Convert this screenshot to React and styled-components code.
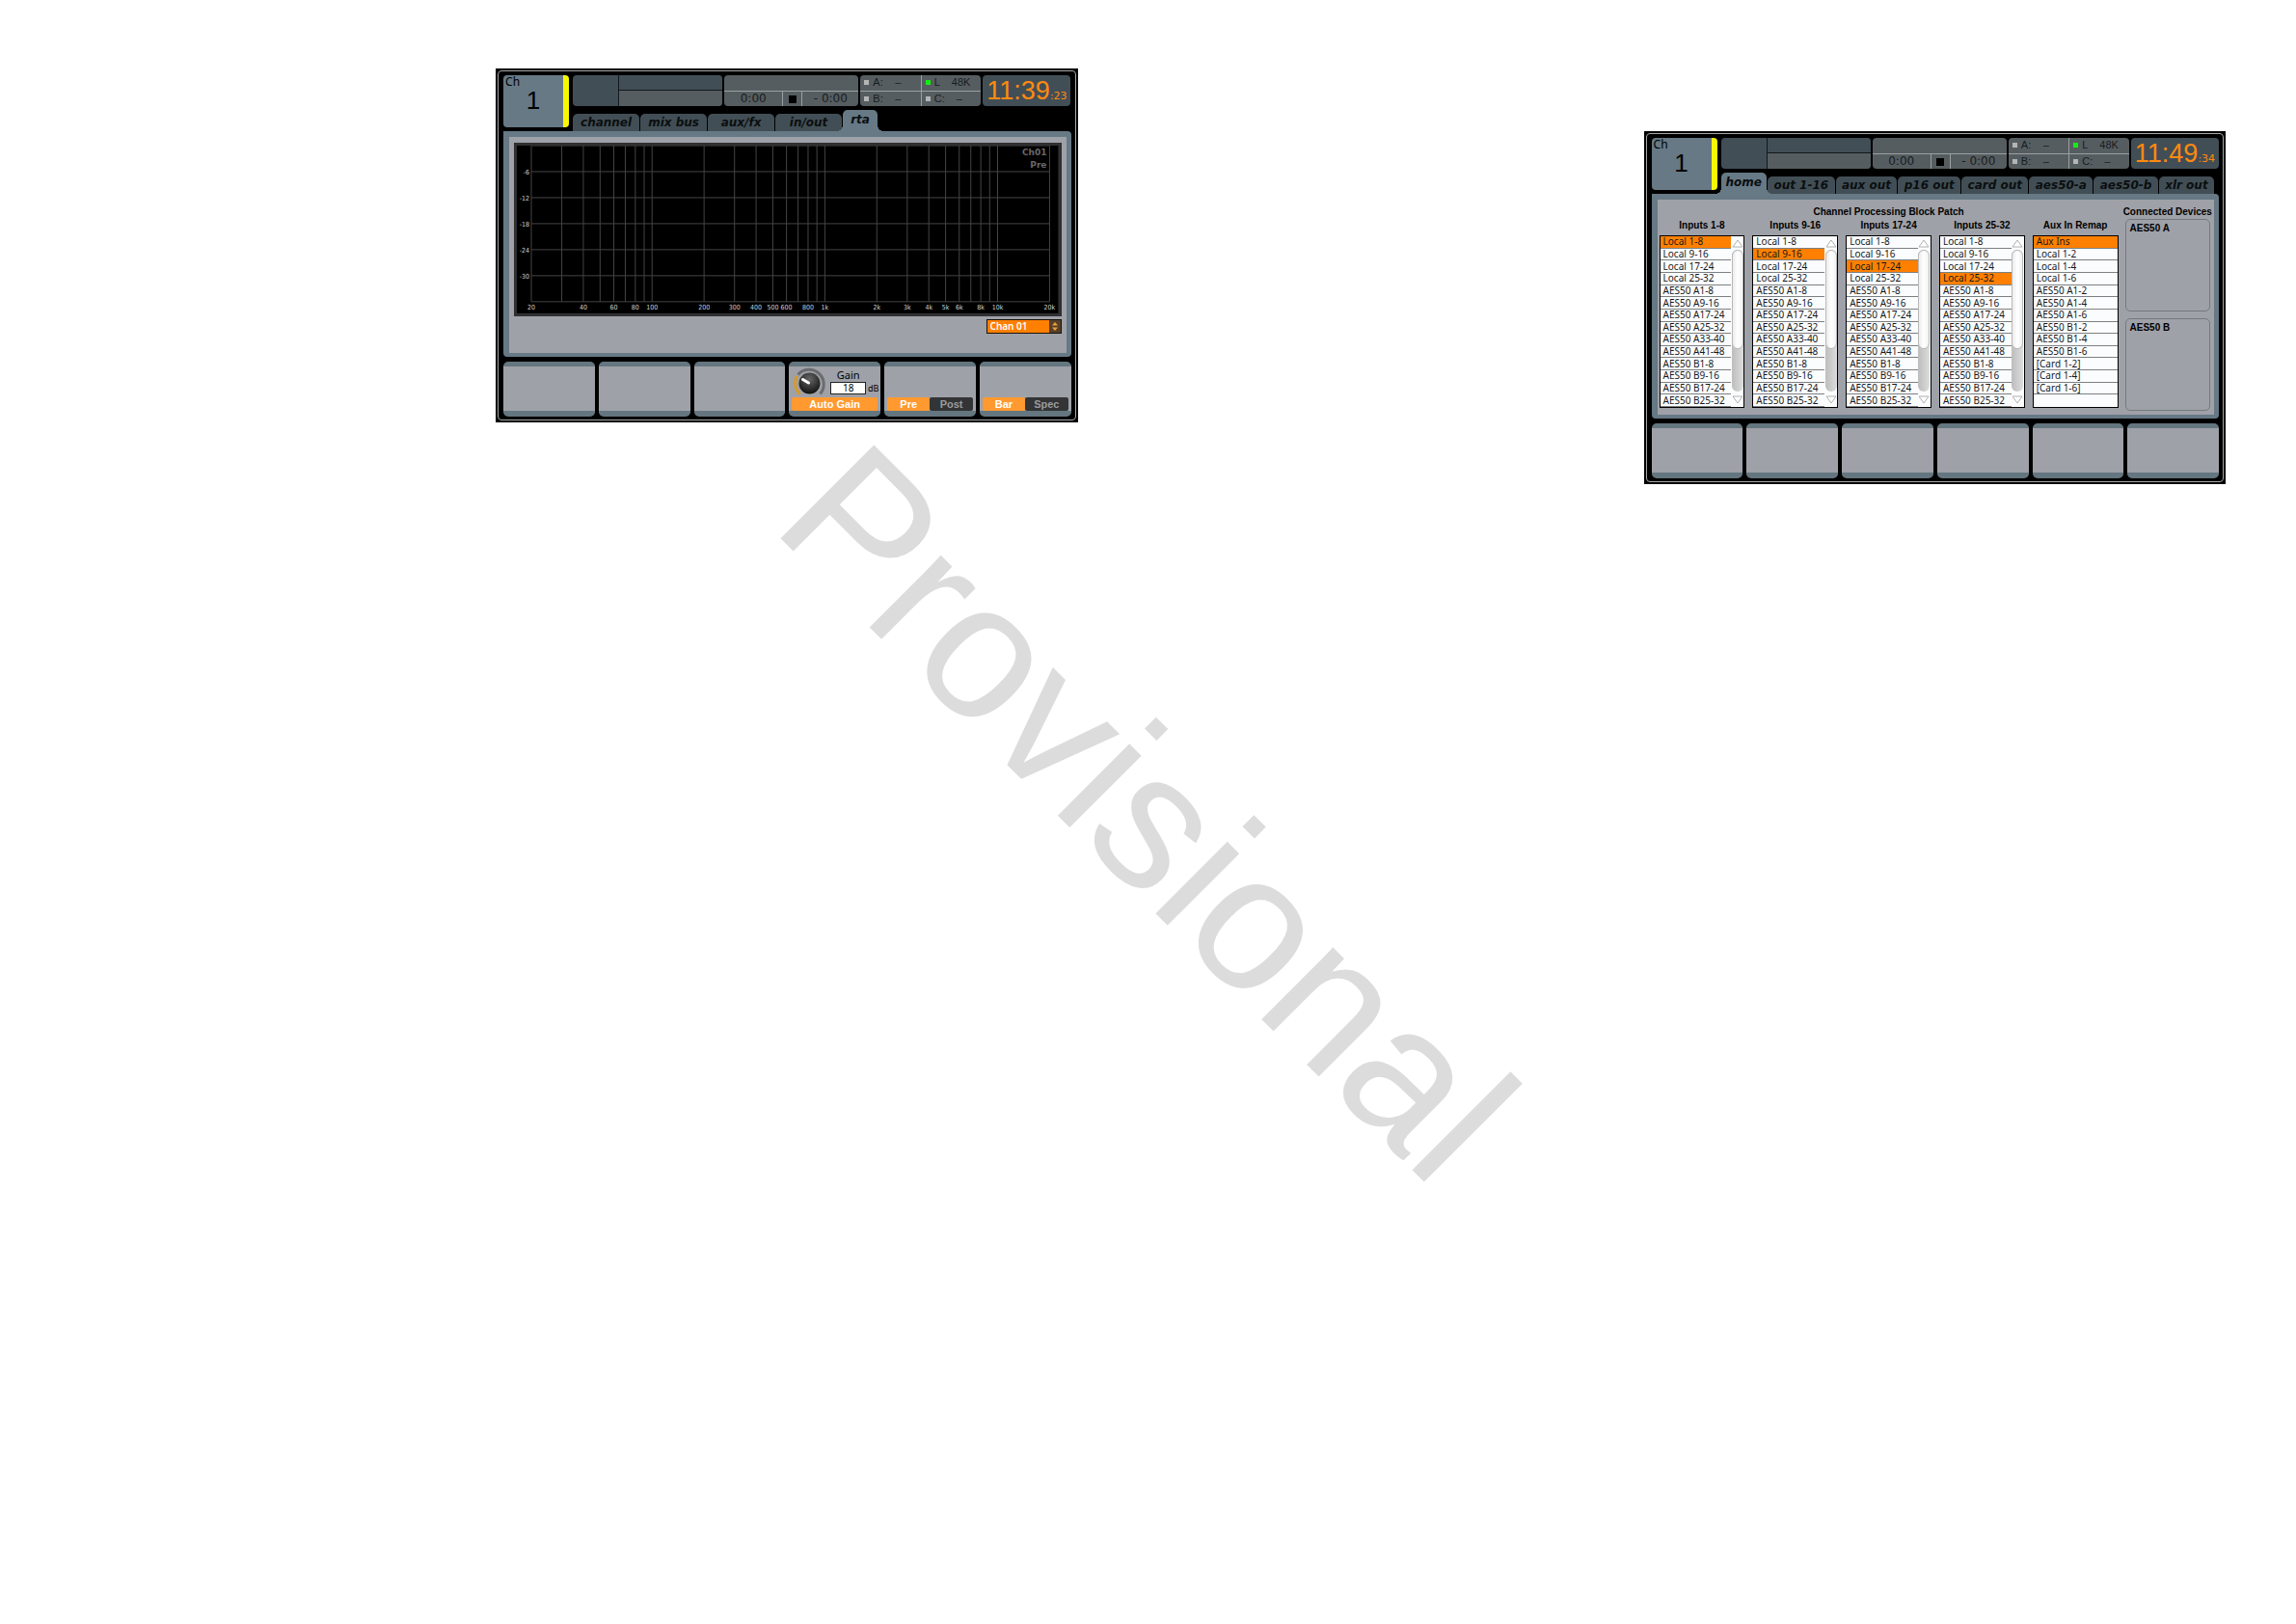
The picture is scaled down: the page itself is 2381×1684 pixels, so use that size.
import React, { useState } from 'react';
import styled, { createGlobalStyle, ThemeProvider } from 'styled-components';

const theme = {
  colors: {
    steel: '#667985',
    slate: '#424e55',
    ash: '#565d60',
    panel: '#9fa1a8',
    orange: '#ff8000',
    amber: '#ff9930',
    clock: '#ff8a10',
    yellow: '#f8f800',
    line: '#9aa0a2',
    ink: '#0a0e10',
  },
  fonts: {
    ui: '"Liberation Sans", Arial, sans-serif',
    list: '"Noto Sans", "Open Sans", sans-serif',
    tab: '"DejaVu Sans", Verdana, sans-serif',
    axis: '"DejaVu Sans Condensed", "DejaVu Sans", sans-serif',
  },
};

const GlobalStyle = createGlobalStyle`
  *, *::before, *::after {
    box-sizing: border-box;
  }
  body {
    margin: 0;
    background: #fff;
  }
  button, input, select {
    margin: 0;
    padding: 0;
    border: 0;
    border-radius: 0;
    background: none;
    color: inherit;
    font: inherit;
  }
  ul {
    margin: 0;
    padding: 0;
    list-style: none;
  }
`;

const Spread = styled.main`
  position: relative;
  display: grid;
  grid-template-columns: 1fr 1fr;
  align-items: start;
  min-height: 100vh;
  overflow: hidden;
  font-family: ${({ theme }) => theme.fonts.ui};
`;

const Sheet = styled.section`
  display: flex;
  justify-content: flex-end;
  padding: ${({ $top }) => $top} 73px 40px 0;
`;

const Watermark = styled.div`
  position: absolute;
  inset: 0;
  display: grid;
  place-items: center;
  pointer-events: none;

  span {
    color: #dcdcdc;
    font-size: 199px;
    line-height: 1;
    transform: rotate(45deg);
  }
`;

const Screen = styled.article`
  width: 54%;
  min-width: 600px;
  padding: 2px;
  background: #000;
`;

const Bezel = styled.div`
  padding: 4px 4px 3px 5px;
  border: 1px solid #a5a7a8;
  border-radius: 4px;
`;

const Header = styled.header`
  display: grid;
  grid-template-columns: 68px 1fr;
  align-items: start;
  gap: 4px;
`;

const HeaderMain = styled.div`
  display: flex;
  flex-direction: column;
  justify-content: space-between;
  height: 58px;
`;

const ChannelBox = styled.div`
  height: 54px;
  border-right: 6px solid ${({ theme }) => theme.colors.yellow};
  border-radius: 4px;
  background: ${({ theme }) => theme.colors.steel};
`;

const ChannelTag = styled.div`
  padding-left: 2px;
  font: 12px/14px ${({ theme }) => theme.fonts.list};
`;

const ChannelNumber = styled.div`
  font-size: 26px;
  line-height: 24px;
  text-align: center;
`;

const StatusBar = styled.div`
  display: grid;
  grid-template-columns: 155fr 139fr 125fr 91fr;
  gap: 2px;
  height: 32px;
`;

const StatusCell = styled.div`
  display: grid;
  grid-template-columns: ${({ $columns }) => $columns || '1fr'};
  overflow: hidden;
  border-radius: 4px;
  background: ${({ theme, $dark }) => ($dark ? theme.colors.slate : theme.colors.ash)};
  color: #171c1f;
`;

const SceneNames = styled.div`
  display: grid;
  grid-template-rows: 1fr 1fr;
  border-left: 1px solid #12181b;

  div:first-child {
    border-bottom: 1px solid #12181b;
    background: ${({ theme }) => theme.colors.slate};
  }
  div:last-child {
    background: ${({ theme }) => theme.colors.ash};
  }
`;

const Recorder = styled.div`
  display: grid;
  grid-template-rows: 16px 16px;
`;

const Transport = styled.div`
  display: grid;
  grid-template-columns: 60fr 20fr 59fr;
  border-top: 1px solid ${({ theme }) => theme.colors.line};
  font: 12px/14px ${({ theme }) => theme.fonts.tab};
  text-align: center;

  > * + * {
    border-left: 1px solid ${({ theme }) => theme.colors.line};
  }
`;

const StopMark = styled.div`
  display: grid;
  place-items: center;

  &::before {
    content: "";
    width: 8px;
    height: 8px;
    background: #000;
  }
`;

const SyncItem = styled.div`
  display: grid;
  grid-template-columns: 5px 14px 1fr;
  align-items: center;
  gap: 4px;
  padding-left: 4px;
  border-top: ${({ $lower, theme }) => ($lower ? `1px solid ${theme.colors.line}` : '0')};
  border-left: ${({ $right, theme }) => ($right ? `1px solid ${theme.colors.line}` : '0')};
  font-size: 11px;
  line-height: 15px;

  &::before {
    content: "";
    height: 5px;
    background: ${({ $on }) => ($on ? '#10f010' : '#b4b6b6')};
  }
  span:last-child {
    padding-left: ${({ $on }) => ($on ? '0' : '5px')};
  }
`;

const Clock = styled.time`
  display: flex;
  align-items: baseline;
  justify-content: center;
  color: ${({ theme }) => theme.colors.clock};
  font-size: 27px;
  line-height: 32px;

  small {
    font: 11px/12px ${({ theme }) => theme.fonts.tab};
  }
`;

const TabBar = styled.nav`
  display: flex;
  align-items: flex-end;
  gap: 1px;
  padding-right: ${({ $fill }) => ($fill ? '5px' : '0')};
`;

const Tab = styled.button`
  position: relative;
  z-index: ${({ $active }) => ($active ? 1 : 0)};
  flex-grow: ${({ $grow }) => ($grow ? 1 : 0)};
  min-width: ${({ $minWidth, $active }) => ($active ? '36px' : $minWidth)};
  height: ${({ $active }) => ($active ? '22px' : '18px')};
  padding: 0 ${({ $active }) => ($active ? '5px' : '6px')};
  border-radius: 5px 5px 0 0;
  background: ${({ theme, $active }) => ($active ? theme.colors.steel : theme.colors.slate)};
  color: ${({ theme }) => theme.colors.ink};
  font: italic bold 12px/16px ${({ theme }) => theme.fonts.tab};
  white-space: nowrap;
  cursor: pointer;

  ${({ $active, theme }) => $active && `
    padding-bottom: 2px;
    &::before, &::after {
      content: "";
      position: absolute;
      bottom: 0;
      width: 6px;
      height: 6px;
    }
    &::before {
      right: 100%;
      background: radial-gradient(circle at 0 0, transparent 6px, ${theme.colors.steel} 6px);
    }
    &::after {
      left: 100%;
      background: radial-gradient(circle at 100% 0, transparent 6px, ${theme.colors.steel} 6px);
    }
  `}
`;

const Panel = styled.div`
  border: solid ${({ theme }) => theme.colors.steel};
  border-width: 6px 5px 4px 6px;
  border-radius: 0 4px 4px 4px;
  background: ${({ theme }) => theme.colors.panel};
`;

const RtaBody = styled.div`
  display: flex;
  flex-direction: column;
  align-items: flex-end;
  gap: 3px;
  padding: 6px 5px 20px;
`;

const Chart = styled.svg`
  display: block;
  width: 100%;
  background: #000;

  .frame {
    fill: none;
    stroke: #303032;
    stroke-width: 6;
  }
  .grid {
    stroke: #444446;
    stroke-width: 1;
  }
  .axis {
    fill: #d0d0d0;
    font: 7px ${({ theme }) => theme.fonts.axis};
  }
  .note {
    fill: #68686a;
    font: bold 9px ${({ theme }) => theme.fonts.tab};
  }
`;

const Picker = styled.label`
  display: grid;
  grid-template-columns: 1fr 12px;
  width: 78px;
  height: 15px;
  border: 1px solid #1c1208;
  background: #55402c;

  select {
    appearance: none;
    padding-left: 3px;
    background: ${({ theme }) => theme.colors.orange};
    color: #fff;
    font: 600 10px/13px ${({ theme }) => theme.fonts.list};
  }
`;

const SoftKeys = styled.footer`
  display: grid;
  grid-template-columns: repeat(6, 1fr);
  gap: 4px;
  margin-top: 5px;
`;

const SoftKey = styled.div`
  display: flex;
  flex-direction: column;
  justify-content: flex-end;
  height: 57px;
  padding: 0 3px;
  border: solid #64767f;
  border-width: 5px 0 6px;
  border-radius: 5px;
  background: ${({ theme }) => theme.colors.panel};
`;

const KnobRow = styled.div`
  display: grid;
  grid-template-columns: 38px 1fr 10px;
  grid-template-rows: 1fr auto;
  align-items: end;
  gap: 0 2px;
  font: 11px/14px ${({ theme }) => theme.fonts.list};
  text-align: center;

  svg {
    grid-row: span 2;
    justify-self: center;
  }
  label {
    grid-column: 2;
  }
  input {
    grid-column: 2;
    width: 100%;
    height: 13px;
    margin-bottom: 3px;
    border: 1px solid #222;
    background: #fff;
    font-size: 10px;
    line-height: 11px;
    text-align: center;
  }
  span {
    margin-bottom: 3px;
    font-size: 9px;
    line-height: 12px;
  }
`;

const Switch = styled.div`
  display: flex;
`;

const SwitchButton = styled.button`
  flex: 1;
  height: 14px;
  border-radius: 2px;
  background: ${({ theme, $on }) => ($on ? theme.colors.amber : '#333436')};
  color: ${({ $on }) => ($on ? '#fff' : '#9b9b9d')};
  font-weight: bold;
  font-size: 11px;
  line-height: 14px;
  cursor: pointer;
`;

const Routing = styled.div`
  display: grid;
  grid-template-columns: minmax(0, 479fr) minmax(0, 89fr);
  gap: 7px;
  padding: 6px 4px 4px 2px;
`;

const Heading = styled.h2`
  display: flex;
  justify-content: center;
  margin: 0;
  font-weight: bold;
  font-size: 10px;
  line-height: 14px;
  white-space: nowrap;
`;

const PatchColumns = styled.div`
  display: grid;
  grid-template-columns: repeat(5, minmax(0, 1fr));
  gap: 8px;
`;

const PatchList = styled.div`
  display: grid;
  grid-template-columns: ${({ $scroll }) => ($scroll ? '1fr 13px' : '1fr')};
  grid-template-rows: minmax(0, 1fr);
  height: 179px;
  margin-top: 3px;
  border: 1px solid #000;
  background: #fbfcfd;

  ul {
    display: grid;
    grid-template-rows: repeat(14, minmax(0, 1fr));
  }
`;

const PatchRow = styled.li`
  border-bottom: 1px solid #7c8083;
  background: ${({ theme, $selected }) => ($selected ? theme.colors.orange : 'transparent')};

  button {
    display: block;
    width: 100%;
    height: 100%;
    padding-left: 3px;
    color: #16191c;
    font: 10px/11px ${({ theme }) => theme.fonts.list};
    text-align: left;
    white-space: nowrap;
    cursor: pointer;
  }
`;

const ScrollBar = styled.div`
  display: grid;
  grid-template-rows: 14px 1fr 16px;
  justify-items: center;
  align-items: center;
`;

const ScrollTrack = styled.div`
  width: 12px;
  height: 100%;
  border-radius: 6px;
  background: linear-gradient(90deg, #bdbdbd, #dcdcdc);

  &::before {
    content: "";
    display: block;
    height: 70%;
    border: 1px solid #b9b9b9;
    border-radius: 6px;
    background: linear-gradient(90deg, #ececec, #fff 50%, #f2f2f2);
  }
`;

const Devices = styled.div`
  display: flex;
  flex-direction: column;
`;

const DeviceBox = styled.div`
  height: 96px;
  padding: 3px 4px;
  border: 1px solid #74797d;
  border-radius: 5px;
  font-weight: bold;
  font-size: 10px;
  line-height: 12px;

  & + & {
    margin-top: 7px;
  }
`;

const FREQUENCIES = [
  20, 30, 40, 50, 60, 70, 80, 90, 100, 200, 300, 400, 500, 600, 700, 800, 900,
  1000, 2000, 3000, 4000, 5000, 6000, 7000, 8000, 9000, 10000, 20000,
];
const UNLABELLED = [30, 50, 70, 90, 700, 900, 7000, 9000];
const LEVELS = [-6, -12, -18, -24, -30];

const INPUTS = [
  'Local 1-8', 'Local 9-16', 'Local 17-24', 'Local 25-32',
  'AES50 A1-8', 'AES50 A9-16', 'AES50 A17-24', 'AES50 A25-32', 'AES50 A33-40', 'AES50 A41-48',
  'AES50 B1-8', 'AES50 B9-16', 'AES50 B17-24', 'AES50 B25-32',
];
const AUX_INPUTS = [
  'Aux Ins', 'Local 1-2', 'Local 1-4', 'Local 1-6',
  'AES50 A1-2', 'AES50 A1-4', 'AES50 A1-6', 'AES50 B1-2', 'AES50 B1-4', 'AES50 B1-6',
  '[Card 1-2]', '[Card 1-4]', '[Card 1-6]',
];
const PATCHES = [
  { title: 'Inputs 1-8', items: INPUTS, initial: 0, scroll: true },
  { title: 'Inputs 9-16', items: INPUTS, initial: 1, scroll: true },
  { title: 'Inputs 17-24', items: INPUTS, initial: 2, scroll: true },
  { title: 'Inputs 25-32', items: INPUTS, initial: 3, scroll: true },
  { title: 'Aux In Remap', items: AUX_INPUTS, initial: 0 },
];

// log scale, 20 Hz at the left edge of the plot and 20 kHz at the right
const freqToX = (freq) => 18 + (Math.log10(freq / 20) * 538) / 3;
const levelToY = (level) => 3 - level * 4.5;
const freqLabel = (freq) => (freq >= 1000 ? `${freq / 1000}k` : freq);

const RtaChart = () => (
  <Chart viewBox="0 0 568 180" role="img" aria-label="Real time analyzer">
    <g className="grid">
      {FREQUENCIES.map((freq) => (
        <line key={freq} x1={freqToX(freq)} x2={freqToX(freq)} y1="3" y2="165" />
      ))}
      {[0, ...LEVELS, -36].map((level) => (
        <line key={level} x1="18" x2="556" y1={levelToY(level)} y2={levelToY(level)} />
      ))}
    </g>
    <g className="axis" textAnchor="end">
      {LEVELS.map((level) => (
        <text key={level} x="16" y={levelToY(level) + 3}>{level}</text>
      ))}
    </g>
    <g className="axis" textAnchor="middle">
      {FREQUENCIES.filter((freq) => !UNLABELLED.includes(freq)).map((freq) => (
        <text key={freq} x={freqToX(freq)} y="173">{freqLabel(freq)}</text>
      ))}
    </g>
    <g className="note" textAnchor="end">
      <text x="553" y="13">Ch01</text>
      <text x="553" y="26">Pre</text>
    </g>
    <rect className="frame" width="568" height="180" />
  </Chart>
);

const Knob = () => (
  <svg width="36" height="32" viewBox="0 0 36 32" aria-hidden="true">
    <defs>
      <radialGradient id="knob" cx="0.5" cy="0.3" r="0.7">
        <stop offset="0" stopColor="#666" />
        <stop offset="1" stopColor="#111" />
      </radialGradient>
    </defs>
    <path d="M7.5 28.5A15 15 0 0 1 4.5 10" fill="none" stroke="#d39a2c" strokeWidth="3" />
    <path d="M5.5 8.5A15 15 0 1 1 28.5 28.5" fill="none" stroke="#6b6c70" strokeWidth="3" />
    <circle cx="17.5" cy="17.5" r="11" fill="url(#knob)" />
    <path d="M10.5 13.5L16.5 17" stroke="#fff" strokeWidth="3" strokeLinecap="round" />
  </svg>
);

const TopBar = ({
  hours, seconds, tabs, initialTab, minWidth = '0', fill,
}) => {
  const [tab, setTab] = useState(initialTab);
  return (
    <Header>
      <ChannelBox>
        <ChannelTag>Ch</ChannelTag>
        <ChannelNumber>1</ChannelNumber>
      </ChannelBox>
      <HeaderMain>
        <StatusBar>
          <StatusCell $dark $columns="47fr 108fr">
            <div />
            <SceneNames>
              <div />
              <div />
            </SceneNames>
          </StatusCell>
          <StatusCell>
            <Recorder>
              <div />
              <Transport>
                <span>0:00</span>
                <StopMark />
                <span>- 0:00</span>
              </Transport>
            </Recorder>
          </StatusCell>
          <StatusCell $columns="1fr 1fr">
            <SyncItem><span>A:</span><span>–</span></SyncItem>
            <SyncItem $right $on><span>L</span><span>48K</span></SyncItem>
            <SyncItem $lower><span>B:</span><span>–</span></SyncItem>
            <SyncItem $lower $right><span>C:</span><span>–</span></SyncItem>
          </StatusCell>
          <StatusCell $dark>
            <Clock>
              {hours}
              <small>{seconds}</small>
            </Clock>
          </StatusCell>
        </StatusBar>
        <TabBar $fill={fill}>
          {tabs.map((name) => (
            <Tab
              key={name}
              type="button"
              $active={name === tab}
              $grow={fill && name !== tab}
              $minWidth={minWidth}
              onClick={() => setTab(name)}
            >
              {name}
            </Tab>
          ))}
        </TabBar>
      </HeaderMain>
    </Header>
  );
};

const Toggle = ({ options }) => {
  const [value, setValue] = useState(options[0]);
  return (
    <Switch>
      {options.map((option) => (
        <SwitchButton
          key={option}
          type="button"
          $on={option === value}
          onClick={() => setValue(option)}
        >
          {option}
        </SwitchButton>
      ))}
    </Switch>
  );
};

const Patch = ({
  title, items, initial, scroll,
}) => {
  const [selected, setSelected] = useState(initial);
  return (
    <div>
      <Heading as="h3">{title}</Heading>
      <PatchList $scroll={scroll}>
        <ul>
          {items.map((item, index) => (
            <PatchRow key={item} $selected={index === selected}>
              <button type="button" onClick={() => setSelected(index)}>{item}</button>
            </PatchRow>
          ))}
        </ul>
        {scroll && (
          <ScrollBar>
            <svg width="12" height="9" viewBox="0 0 12 9" aria-hidden="true">
              <path d="M6 1L11 8H1Z" fill="#fff" stroke="#b0b0b0" />
            </svg>
            <ScrollTrack />
            <svg width="12" height="9" viewBox="0 0 12 9" aria-hidden="true">
              <path d="M6 8L11 1H1Z" fill="#fff" stroke="#b0b0b0" />
            </svg>
          </ScrollBar>
        )}
      </PatchList>
    </div>
  );
};

const RtaScreen = () => (
  <Screen>
    <Bezel>
      <TopBar
        hours="11:39"
        seconds=":23"
        tabs={['channel', 'mix bus', 'aux/fx', 'in/out', 'rta']}
        initialTab="rta"
        minWidth="69px"
      />
      <Panel>
        <RtaBody>
          <RtaChart />
          <Picker>
            <select aria-label="Source" defaultValue="Chan 01">
              <option>Chan 01</option>
            </select>
            <svg width="12" height="13" viewBox="0 0 12 13" aria-hidden="true">
              <path d="M6 2L9 5.500H3Z M6 11L9 7.500H3Z" fill="#f0a030" />
            </svg>
          </Picker>
        </RtaBody>
      </Panel>
      <SoftKeys>
        <SoftKey />
        <SoftKey />
        <SoftKey />
        <SoftKey>
          <KnobRow>
            <Knob />
            <label htmlFor="gain">Gain</label>
            <input id="gain" defaultValue="18" />
            <span>dB</span>
          </KnobRow>
          <Toggle options={['Auto Gain']} />
        </SoftKey>
        <SoftKey>
          <Toggle options={['Pre', 'Post']} />
        </SoftKey>
        <SoftKey>
          <Toggle options={['Bar', 'Spec']} />
        </SoftKey>
      </SoftKeys>
    </Bezel>
  </Screen>
);

const RoutingScreen = () => (
  <Screen>
    <Bezel>
      <TopBar
        hours="11:49"
        seconds=":34"
        tabs={['home', 'out 1-16', 'aux out', 'p16 out', 'card out', 'aes50-a', 'aes50-b', 'xlr out']}
        initialTab="home"
        fill
      />
      <Panel>
        <Routing>
          <div>
            <Heading>Channel Processing Block Patch</Heading>
            <PatchColumns>
              {PATCHES.map((patch) => (
                <Patch key={patch.title} {...patch} />
              ))}
            </PatchColumns>
          </div>
          <Devices>
            <Heading>Connected Devices</Heading>
            <DeviceBox>AES50 A</DeviceBox>
            <DeviceBox>AES50 B</DeviceBox>
          </Devices>
        </Routing>
      </Panel>
      <SoftKeys>
        {[1, 2, 3, 4, 5, 6].map((key) => <SoftKey key={key} />)}
      </SoftKeys>
    </Bezel>
  </Screen>
);

const App = () => (
  <ThemeProvider theme={theme}>
    <GlobalStyle />
    <Spread>
      <Sheet $top="71px">
        <RtaScreen />
      </Sheet>
      <Sheet $top="136px">
        <RoutingScreen />
      </Sheet>
      <Watermark>
        <span>Provisional</span>
      </Watermark>
    </Spread>
  </ThemeProvider>
);

export default App;
